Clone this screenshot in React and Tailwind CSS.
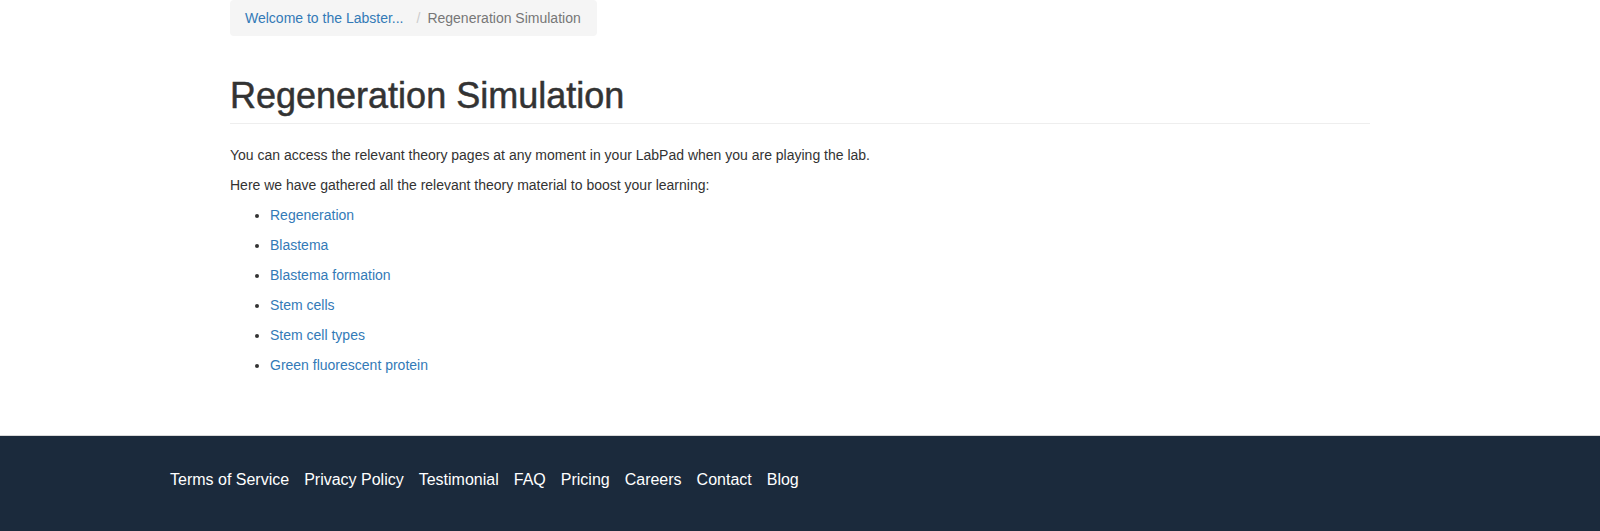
export default function App() {
  const items = [
    "Regeneration",
    "Blastema",
    "Blastema formation",
    "Stem cells",
    "Stem cell types",
    "Green fluorescent protein",
  ];
  const footer = ["Terms of Service", "Privacy Policy", "Testimonial", "FAQ", "Pricing", "Careers", "Contact", "Blog"];
  return (
    <div className="bg-white text-[#333] text-[14px] leading-[20px]" style={{ fontFamily: '"Liberation Sans", Arial, sans-serif' }}>
      <div className="w-[1170px] mx-auto px-[15px]">
        <ol className="inline-flex items-center whitespace-nowrap bg-[#f5f5f5] rounded-[4px] pl-[15px] pr-[16px] py-[8px]">
          <li><a href="#" className="text-[#337ab7]">Welcome to the Labster...</a></li>
          <li className="pl-[13px] pr-[7px] text-[#ccc]">/</li>
          <li className="text-[#777]">Regeneration Simulation</li>
        </ol>
        <div className="mt-[40px] pb-[7px] border-b border-[#eee] mb-[21px]">
          <h1 className="text-[36px] leading-[40px] font-medium text-[#333] [-webkit-text-stroke:0.5px_#333]">Regeneration Simulation</h1>
        </div>
        <p className="mb-[10px]">You can access the relevant theory pages at any moment in your LabPad when you are playing the lab.</p>
        <p className="mb-[10px]">Here we have gathered all the relevant theory material to boost your learning:</p>
        <ul className="list-disc pl-[40px] flex flex-col gap-[10px]">
          {items.map((t) => (
            <li key={t}><a href="#" className="text-[#337ab7]">{t}</a></li>
          ))}
        </ul>
      </div>
      <footer className="mt-[60px] border-t border-[#d9d9d9] bg-[#1b2a3c] pt-[34px] pb-[41px]">
        <div className="w-[1260px] mx-auto flex gap-[15px] text-white text-[16px] leading-[20px]">
          {footer.map((t) => (
            <a key={t} href="#" className="text-white">{t}</a>
          ))}
        </div>
      </footer>
    </div>
  );
}
